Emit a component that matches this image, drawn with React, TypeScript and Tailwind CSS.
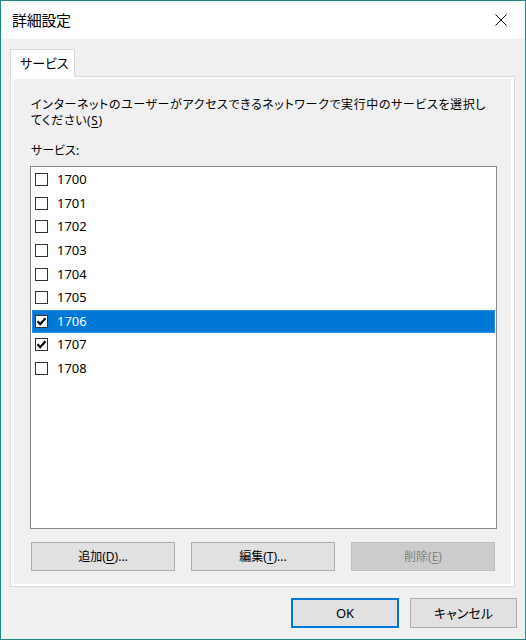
import React from "react";

const items = ["1700", "1701", "1702", "1703", "1704", "1705", "1706", "1707", "1708"];
const checked = new Set(["1706", "1707"]);

function CheckBox({ on }: { on: boolean }) {
  return (
    <div className="w-[13px] h-[13px] border border-[#333333] bg-white flex items-center justify-center shrink-0">
      {on && (
        <svg width="11" height="11" viewBox="0 0 11 11">
          <path d="M1.5 5.3 L4.2 8.2 L9.5 2.3" fill="none" stroke="#000" strokeWidth="2.2" />
        </svg>
      )}
    </div>
  );
}

export default function App() {
  return (
    <div className="w-[526px] h-[640px] border border-[#1b8a7d] bg-[#f0f0f0] flex flex-col font-['Noto_Sans','Noto_Sans_CJK_JP',sans-serif] [font-feature-settings:'palt'] text-[#000] overflow-hidden">
      {/* Title bar */}
      <div className="h-[38px] bg-white flex items-center justify-between pl-[11px] pr-[18px] shrink-0">
        <span className="text-[15px] leading-none tracking-[-0.3px]">詳細設定</span>
        <svg width="12" height="12" viewBox="0 0 12 12">
          <path d="M0.5 0.5 L11.5 11.5 M11.5 0.5 L0.5 11.5" stroke="#111" strokeWidth="1" />
        </svg>
      </div>

      {/* Body */}
      <div className="flex flex-col pt-[10px] pl-[9px] pr-[10px]">
        {/* Tab */}
        <div className="relative z-10 -mb-px w-[65px] h-[28px] bg-white border border-b-0 border-[#d9d9d9] flex items-center pl-[9px] text-[13px]">
          サービス
        </div>
        {/* Panel */}
        <div className="w-[505px] h-[511px] border border-[#d9d9d9] bg-white pt-[2px] px-[3px] pb-[2px] flex">
          <div className="flex-1 bg-[#f0f0f0] flex flex-col pl-[16px] pr-[14px]">
            <div className="pl-[1px] pt-[18px] text-[12px] leading-[16px] whitespace-nowrap tracking-[0.6px]">
              インターネットのユーザーがアクセスできるネットワークで実行中のサービスを選択し
              <br />
              てください(<span className="underline underline-offset-2">S</span>)
            </div>
            <div className="pl-[1px] mt-[14px] text-[12px] leading-[16px]">サービス:</div>
            {/* List box */}
            <div className="mt-[7px] w-[467px] h-[363px] border border-[#828790] bg-white pt-[1px] flex flex-col">
              {items.map((it) => {
                const sel = it === "1706";
                return (
                  <div
                    key={it}
                    className={
                      "h-[23.6px] mx-[1px] flex items-center pl-[3px] " +
                      (sel ? "bg-[#0078d7] outline outline-1 -outline-offset-1 outline-[#2a8ae0]" : "")
                    }
                  >
                    <CheckBox on={checked.has(it)} />
                    <span className={"ml-[9px] text-[13px] leading-none " + (sel ? "text-white" : "text-[#000]")}>{it}</span>
                  </div>
                );
              })}
            </div>
            {/* Buttons */}
            <div className="mt-[13px] pl-[1px] flex gap-[16px]">
              <button className="w-[144px] h-[29px] bg-[#e1e1e1] border border-[#adadad] text-[12px] leading-none flex items-center justify-center">
                追加(<span className="underline underline-offset-2">D</span>)...
              </button>
              <button className="w-[144px] h-[29px] bg-[#e1e1e1] border border-[#adadad] text-[12px] leading-none flex items-center justify-center">
                編集(<span className="underline underline-offset-2">T</span>)...
              </button>
              <button className="w-[144px] h-[29px] bg-[#cccccc] border border-[#bfbfbf] text-[12px] leading-none text-[#838383] flex items-center justify-center">
                削除(<span className="underline underline-offset-2">E</span>)
              </button>
            </div>
          </div>
        </div>
      </div>

      {/* Footer */}
      <div className="flex justify-end gap-[11px] pr-[8px] mt-[11px]">
        <button className="w-[108px] h-[30px] bg-[#e1e1e1] border-2 border-[#0078d7] text-[13px] leading-none flex items-center justify-center">
          OK
        </button>
        <button className="w-[107px] h-[30px] bg-[#e1e1e1] border border-[#adadad] text-[13px] leading-none flex items-center justify-center">
          キャンセル
        </button>
      </div>
    </div>
  );
}
